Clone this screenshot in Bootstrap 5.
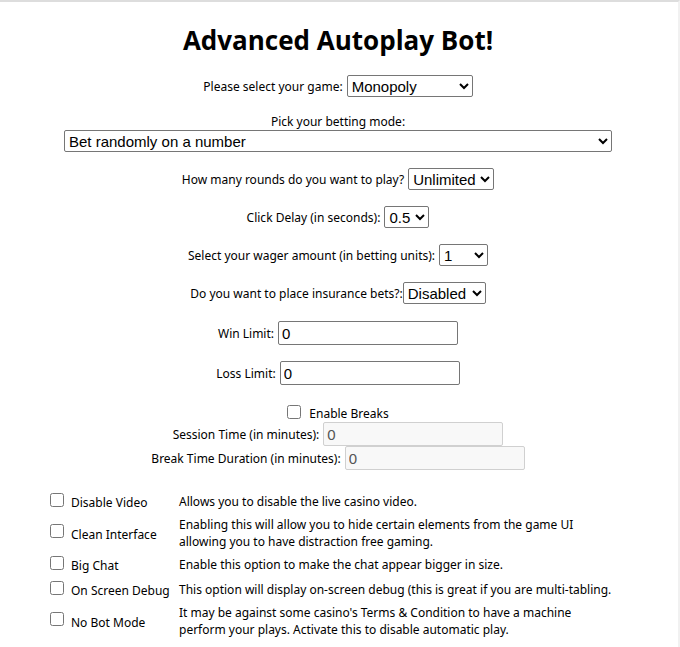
<!DOCTYPE html>
<html lang="en">
<head>
<meta charset="utf-8">
<meta name="viewport" content="width=device-width, initial-scale=1">
<title>Advanced Autoplay Bot!</title>
<link href="https://cdn.jsdelivr.net/npm/bootstrap@5.3.0/dist/css/bootstrap.min.css" rel="stylesheet">
<style>
body { font-family: "Noto Sans", "Open Sans", sans-serif; font-size: 12px; line-height: 17px; color: #000; background: #fff; }
.bot-page { min-height: 100vh; border-top: 2px solid #ddd; border-right: 2px solid #f1f1f1; padding: 21px 2px 4px 0; }
.bot-title { font-family: "Open Sans", "Noto Sans", sans-serif; font-size: 26px; line-height: 34px; font-weight: 700; margin-bottom: 18px; }
.bot-form { padding: 0 64px; }
.bot-row { display: flex; justify-content: center; align-items: center; gap: 4px; margin-bottom: 16px; white-space: nowrap; }
.bot-row.tight { gap: 0; }
.bot-select, .bot-input { font-family: "Liberation Sans", Arial, sans-serif; font-size: 15px; line-height: 17px; color: #000; background-color: #fff; border: 1px solid #767676; border-radius: 2px; }
.bot-select { height: 22px; padding: 0; }
.bot-input { width: 180px; height: 24px; padding: 1px 3px; }
.bot-input:disabled { color: #545454; background: #f8f8f8; border-color: #d0d0d0; }
.w-game { width: 126px; }
.w-rounds { width: 86px; }
.w-delay { width: 45px; }
.w-wager { width: 49px; }
.w-insure { width: 83px; }
.bot-check { width: 14px; height: 14px; margin: 0; flex: none; }
.bot-limits { padding-top: 1px; }
.bot-options { width: auto; margin: 19px 46px 0 50px; }
.bot-options td, .bot-options th { padding: 2px 0; height: 25px; vertical-align: middle; font-weight: 400; }
.bot-options tr.two-line > * { height: 38px; }
.bot-options th { width: 129px; white-space: nowrap; }
.bot-options th .bot-check { margin: 0 7px 4px 0; }
.bot-options label { padding-top: 2px; }
</style>
</head>
<body>
<main class="bot-page">
  <h1 class="bot-title text-center">Advanced Autoplay Bot!</h1>
  <form class="bot-form">
    <div class="bot-row"><label for="game">Please select your game:</label><select id="game" class="bot-select w-game"><option>Monopoly</option></select></div>
    <div class="bot-row flex-column tight"><label for="mode">Pick your betting mode:</label><select id="mode" class="bot-select w-100"><option>Bet randomly on a number</option></select></div>
    <div class="bot-row"><label for="rounds">How many rounds do you want to play?</label><select id="rounds" class="bot-select w-rounds"><option>Unlimited</option></select></div>
    <div class="bot-row"><label for="delay">Click Delay (in seconds):</label><select id="delay" class="bot-select w-delay"><option>0.5</option></select></div>
    <div class="bot-row"><label for="wager">Select your wager amount (in betting units):</label><select id="wager" class="bot-select w-wager"><option>1</option></select></div>
    <div class="bot-row tight"><label for="insure">Do you want to place insurance bets?:</label><select id="insure" class="bot-select w-insure"><option>Disabled</option></select></div>
    <div class="bot-limits">
      <div class="bot-row"><label for="win">Win Limit:</label><input id="win" class="bot-input" type="text" value="0"></div>
      <div class="bot-row"><label for="loss">Loss Limit:</label><input id="loss" class="bot-input" type="text" value="0"></div>
      <div class="bot-row align-items-start mb-0 gap-2 pt-1"><input id="breaks" class="bot-check" type="checkbox"><label for="breaks">Enable Breaks</label></div>
      <div class="bot-row mb-0"><label for="session">Session Time (in minutes):</label><input id="session" class="bot-input" type="text" value="0" disabled></div>
      <div class="bot-row mb-0"><label for="pause">Break Time Duration (in minutes):</label><input id="pause" class="bot-input" type="text" value="0" disabled></div>
    </div>
  </form>
  <table class="bot-options">
    <tbody>
      <tr><th scope="row"><div class="d-flex align-items-center"><input id="video" class="bot-check" type="checkbox"><label for="video">Disable Video</label></div></th><td>Allows you to disable the live casino video.</td></tr>
      <tr class="two-line"><th scope="row"><div class="d-flex align-items-center"><input id="clean" class="bot-check" type="checkbox"><label for="clean">Clean Interface</label></div></th><td>Enabling this will allow you to hide certain elements from the game UI<br>allowing you to have distraction free gaming.</td></tr>
      <tr><th scope="row"><div class="d-flex align-items-center"><input id="chat" class="bot-check" type="checkbox"><label for="chat">Big Chat</label></div></th><td>Enable this option to make the chat appear bigger in size.</td></tr>
      <tr><th scope="row"><div class="d-flex align-items-center"><input id="debug" class="bot-check" type="checkbox"><label for="debug">On Screen Debug</label></div></th><td>This option will display on-screen debug (this is great if you are multi-tabling.</td></tr>
      <tr class="two-line"><th scope="row"><div class="d-flex align-items-center"><input id="nobot" class="bot-check" type="checkbox"><label for="nobot">No Bot Mode</label></div></th><td>It may be against some casino's Terms &amp; Condition to have a machine<br>perform your plays. Activate this to disable automatic play.</td></tr>
    </tbody>
  </table>
</main>
<script src="https://cdn.jsdelivr.net/npm/bootstrap@5.3.0/dist/js/bootstrap.bundle.min.js"></script>
</body>
</html>
